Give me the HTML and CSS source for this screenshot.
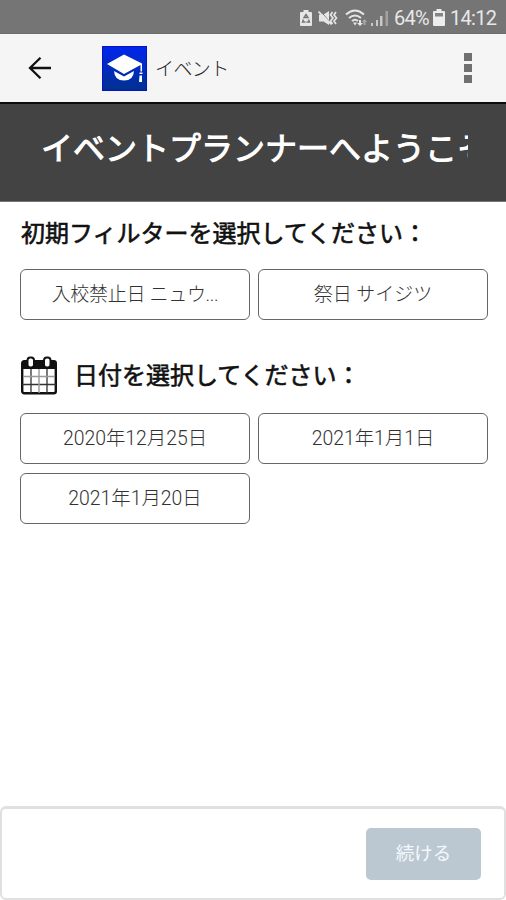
FILE: index.html
```
<!DOCTYPE html>
<html lang="ja">
<head>
<meta charset="utf-8">
<title>イベント</title>
<link rel="stylesheet" href="styles.css">
</head>
<body>
<div class="screen">
  <div class="status">
    <svg class="s-saver" width="12" height="16" viewBox="0 0 12 16"><path fill="#e6e6e6" d="M3.500 0h5v2H11q1 0 1 1v12q0 1-1 1H1q-1 0-1-1V3q0-1 1-1h2.500z"/><path d="M6 4.500 8 7.500H4zM3.500 9.500l-1 2.500h3M8.500 9.500l1 2.500h-3" fill="none" stroke="#757575" stroke-width="1.400"/></svg>
    <svg class="s-mute" width="20" height="18" viewBox="0 0 20 18"><path fill="#e6e6e6" d="M1 5.500h4.500L11 2v14l-5.500-3.500H1z"/><path d="M2 1.500l12 14" stroke="#757575" stroke-width="1"/><path d="M.5 2.500l13 13M14.500 3l-2 3 2.500 3-2.500 3 2 3M18 3l-2 3 2.500 3-2.500 3 2 3" fill="none" stroke="#e6e6e6" stroke-width="1.700"/></svg>
    <svg class="s-wifi" width="23" height="18" viewBox="0 0 23 18"><path d="M1 5.500q9-8 18 0M4 9q6-5 12 0M7 12q3-2.500 6 0" fill="none" stroke="#e6e6e6" stroke-width="2"/><path fill="#e6e6e6" d="M8 13.500h4l-2 3zM14 11h2v3h2l-3 3-3-3h2z"/><path fill="#a8a8a8" d="M18.500 16v-3H17l2.500-3 2.500 3h-1.500v3z"/></svg>
    <svg class="s-signal" width="17" height="16" viewBox="0 0 17 16"><path fill="#c8c8c8" d="M0 13h2v3H0zM5 10h2v6H5zM9 6h2.500v10H9z"/><path fill="#a2a2a2" d="M14.500 1H17v15h-2.500z"/></svg>
    <span class="pct">64%</span>
    <svg class="s-batt" width="12" height="17" viewBox="0 0 12 17"><path fill="#ededed" d="M3.500 0h5v2H11q1 0 1 1v13q0 1-1 1H1q-1 0-1-1V3q0-1 1-1h2.500z"/><path fill="#858585" d="M2 4h8v3.500H2z"/></svg>
    <span class="clock">14:12</span>
  </div>
  <header class="appbar">
    <svg class="back" width="24" height="24" viewBox="0 0 24 24"><path d="M23 12H2M12.500 1.700 2 12l10.500 10.300" fill="none" stroke="#111" stroke-width="2.300"/></svg>
    <svg class="logo" width="45" height="45" viewBox="0 0 45 45"><defs><linearGradient id="blue" x2="0" y2="1"><stop offset="0" stop-color="#0026ee"/><stop offset="1" stop-color="#00308f"/></linearGradient></defs><rect x=".5" y=".5" width="44" height="44" fill="url(#blue)" stroke="#0712c0"/><path fill="#fff" d="M12 25 22 30.500 32 25q-.5 9.500-10 9.500t-10-9.500z"/><path fill="#fff" d="M22 8.500 40 17.500v8h-1.500v-6.500L22 28 5 18z"/><path fill="#fff" d="M37.500 26.500h3V28h-3zM37.500 29.500h2.500v6.500h-3z"/></svg>
    <span class="appname">イベント</span>
    <span class="more"><i></i><i></i><i></i></span>
  </header>
  <div class="banner"><h1>イベントプランナーへようこそ</h1></div>
  <main>
    <h2>初期フィルターを選択してください：</h2>
    <div class="grid filters">
      <button><span class="clipped">入校禁止日 ニュウ...</span></button>
      <button><span>祭日 サイジツ</span></button>
    </div>
    <h2 class="dated"><svg width="36" height="39" viewBox="0 0 36 39"><rect x="1.200" y="5.200" width="33.600" height="32" rx="2" fill="#fff" stroke="#111" stroke-width="2.400"/><path fill="#111" d="M1 5h34v8H1z"/><path d="M10 13v24M26 13v24M1 28.500h34" stroke="#333" stroke-width="1.300"/><path d="M18 13v24M2 20.500h32" stroke="#999" stroke-width="1.400"/><rect x="6.500" y="1.500" width="6.500" height="10" rx="2.800" fill="#fff" stroke="#111" stroke-width="2"/><rect x="23" y="1.500" width="6.500" height="10" rx="2.800" fill="#fff" stroke="#111" stroke-width="2"/></svg><span>日付を選択してください：</span></h2>
    <div class="grid dates">
      <button><span>2020年12月25日</span></button>
      <button><span>2021年1月1日</span></button>
      <button><span>2021年1月20日</span></button>
    </div>
  </main>
  <footer><button class="next">続ける</button></footer>
</div>
</body>
</html>
```
FILE: styles.css
```
* { box-sizing: border-box; }
body { margin: 0; font-family: Roboto, "Noto Sans CJK JP", sans-serif; background: #fff; }
.screen { width: 506px; height: 900px; display: flex; flex-direction: column; overflow: hidden; }
.status { height: 34px; flex: none; display: flex; align-items: center; padding: 2px 9px 0 0; justify-content: flex-end; background: #757575; border-bottom: 1px solid #6b6b6b; color: #e8e8e8; font-size: 20px; line-height: 30px; }
.s-saver { margin-right: 6px; }
.s-mute { margin-right: 7px; }
.s-wifi { margin-right: 3px; }
.s-signal { margin-right: 6px; }
.pct { width: 34px; margin-right: 5px; }
.s-batt { margin-right: 5px; }
.clock { width: 47px; }
.pct, .clock { white-space: nowrap; letter-spacing: -.7px; }
.appbar { height: 70px; flex: none; display: flex; align-items: center; padding: 0 34px 0 28px; background: #f5f5f5; border-bottom: 2px solid #0c0c0c; }
.logo { margin-left: 50px; }
.appname { margin: 3px 0 0 8px; font-size: 19px; font-weight: 300; color: #222; letter-spacing: -.6px; line-height: 28px; }
.more { margin-left: auto; display: grid; gap: 3px; }
.more i { width: 8px; height: 8px; background: #707070; }
.banner { height: 98px; flex: none; padding: 21px 38px 0 41px; background: #434343; border-bottom: 1px solid #777; }
h1 { margin: 0; overflow: hidden; white-space: nowrap; color: #fff; font-size: 32px; line-height: 48px; font-weight: 400; -webkit-text-stroke: 1px #fff; }
main { flex: 1; padding: 15px 18px 0 20px; }
h2 { margin: 0; padding-left: 1px; font-size: 24px; line-height: 34px; font-weight: 400; color: #111; -webkit-text-stroke: .6px #111; }
.grid { display: grid; grid-template-columns: 1fr 1fr; gap: 9px 8px; margin-top: 18px; }
.filters { margin-bottom: 36px; }
.grid button { height: 51px; padding: 0; border: 1px solid #666; border-radius: 6px; background: #fff; font: 300 19px/49px Roboto, "Noto Sans CJK JP", sans-serif; color: #333; white-space: nowrap; }
.grid .clipped { letter-spacing: -.3px; }
.dates button { font-size: 19.400px; }
.dated { display: flex; align-items: center; gap: 17px; height: 39px; }
footer { height: 94px; flex: none; display: flex; justify-content: flex-end; padding: 19px 23px 0; border: 2px solid #e0e0e0; border-top-width: 3px; border-radius: 6px; }
.next { width: 115px; height: 52px; padding: 0; border: 0; border-radius: 5px; background: #bcc8d1; color: #f3f8fb; font: 400 18.500px/51px Roboto, "Noto Sans CJK JP", sans-serif; }
```
